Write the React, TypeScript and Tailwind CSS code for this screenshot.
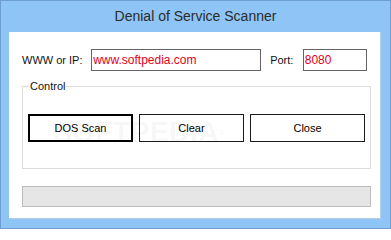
import React from "react";

const FONT = { fontFamily: '"Liberation Sans", Arial, sans-serif' };

function Btn({ label, width, focused }: { label: string; width: string; focused?: boolean }) {
  return (
    <button
      className={
        focused
          ? `${width} h-[28px] border-2 border-black bg-white text-[11px] text-black`
          : `${width} h-[28px] border border-[#1a1a1a] bg-white text-[11px] text-black`
      }
    >
      {label}
    </button>
  );
}

export default function App() {
  return (
    <div
      className="relative flex h-[229px] w-[391px] flex-col border border-[#6e9dd2] bg-[#8ec5f6]"
      style={FONT}
    >
      {/* title bar */}
      <div className="flex h-[31px] items-center justify-center text-[14px] text-[#2b2b2b]">
        Denial of Service Scanner
      </div>

      {/* client area */}
      <div className="ml-[8px] mr-[9px] h-[187px] border-r border-b border-[#b4cde4] bg-white px-[13px] pt-[17px]">
        <div className="flex h-[22px] items-center">
          <span className="w-[70px] text-[11px] text-[#111]">WWW or IP:</span>
          <div className="flex h-[22px] w-[172px] items-center border border-[#646464] px-[1px] text-[12px] text-[#e2001a]">
            www.softpedia.com
          </div>
          <span className="ml-[9px] w-[33px] text-[11px] text-[#111]">Port:</span>
          <div className="flex h-[22px] w-[65px] items-center border border-[#646464] px-[1px] text-[12px] text-[#e2001a]">
            8080
          </div>
        </div>

        <fieldset className="mt-[9px] w-[349px] border border-[#dcdcdc] pb-[26px] pl-[5px]">
          <legend className="ml-[1px] px-[1px] text-[11px] leading-[13px] text-[#111]">Control</legend>
          <div className="relative mt-[21px] flex gap-[6px]">
            <Btn label="DOS Scan" width="w-[105px]" focused />
            <Btn label="Clear" width="w-[105px]" />
            <Btn label="Close" width="w-[115px]" />
            {/* watermark */}
            <span className="pointer-events-none absolute left-[25px] top-[-3px] text-[29px] font-bold tracking-[0px] text-black/[0.045]">
              SOFTPEDIA<sup className="text-[10px]">®</sup>
            </span>
          </div>
        </fieldset>

        <div className="mt-[17px] h-[21px] w-[349px] border border-[#bcbcbc] bg-[#e6e6e6]" />
      </div>
    </div>
  );
}
